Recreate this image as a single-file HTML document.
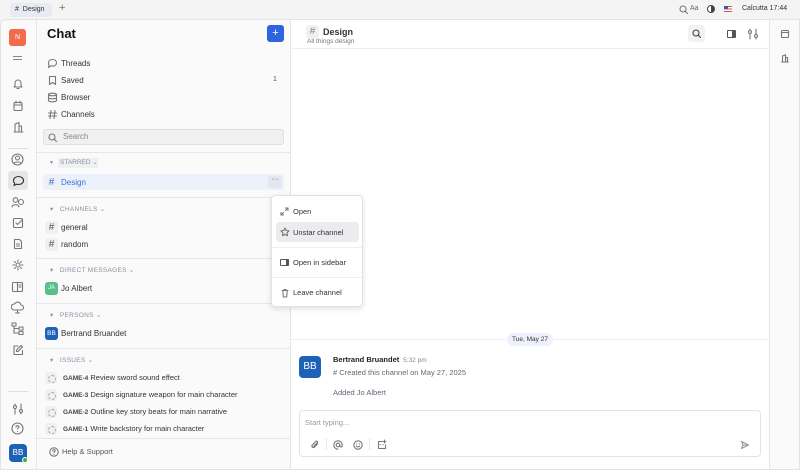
<!DOCTYPE html>
<html><head><meta charset="utf-8"><style>
*{box-sizing:border-box;margin:0;padding:0}
body{width:800px;height:470px;overflow:hidden;background:#f4f4f5;font-family:"Liberation Sans",sans-serif;font-size:8px;color:#222;position:relative}
.a{position:absolute}
svg{position:absolute;fill:none;stroke:#777;stroke-width:1.1;stroke-linecap:round;stroke-linejoin:round}
.nav{position:absolute;left:61px;font-size:8px;color:#333}
.sec{position:absolute;left:50px;font-size:6.5px;color:#8a90a0;letter-spacing:.3px}
.hash{position:absolute;width:13px;height:13px;background:#eef0f3;border-radius:3px;color:#555;font-size:10px;text-align:center;line-height:13px}
.hr{position:absolute;left:37px;width:253px;height:1px;background:#e6e6e8}
.iss{position:absolute;left:45px;font-size:7.5px;color:#333}
.iss b{font-size:6.5px;color:#444}
.iss i{display:inline-block;width:12px;height:12px;background:#eef0f3;border-radius:3px;vertical-align:middle;margin-right:6px;position:relative}
.iss i:after{content:"";position:absolute;left:3px;top:3px;width:6px;height:6px;border:1px dashed #aaa;border-radius:50%}
.mi{position:absolute;left:21px;font-size:7.5px;color:#333}
</style></head><body>
<!-- top bar -->
<div class="a" style="left:10px;top:3px;width:42px;height:14px;background:#e9ebf3;border-radius:3px;font-size:7px;line-height:14px;padding-left:5px;color:#333">#&nbsp; Design</div>
<div class="a" style="left:59px;top:2px;font-size:11px;color:#777">+</div>
<svg style="left:679px;top:5px" width="9" height="9" viewBox="0 0 9 9"><circle cx="4" cy="4" r="3"/><path d="M6 6l2.5 2.5"/></svg>
<div class="a" style="left:690px;top:5px;font-size:7px;color:#666">Aa</div>
<div class="a" style="left:707px;top:5px;width:8px;height:8px;border-radius:50%;border:1px solid #444;background:linear-gradient(90deg,#fff 50%,#444 50%)"></div>
<div class="a" style="left:724px;top:6px;width:8px;height:6px;background:linear-gradient(#c55 0 20%,#fff 20% 40%,#c55 40% 60%,#fff 60% 80%,#c55 80%)"></div>
<div class="a" style="left:724px;top:6px;width:4px;height:3px;background:#45a"></div>
<div class="a" style="left:742px;top:5px;font-size:7px;color:#333">Calcutta 17:44</div>
<!-- frame -->
<div class="a" style="left:0;top:19px;width:800px;height:451px;background:#fafafa;border:1px solid #e3e3e5;border-radius:6px 0 0 0"></div>
<div class="a" style="left:36px;top:20px;width:1px;height:450px;background:#e6e6e8"></div>
<!-- rail -->
<div class="a" style="left:9px;top:29px;width:17px;height:17px;background:#f26b4b;border-radius:3px;color:#fff;font-size:7px;text-align:center;line-height:17px">N</div>
<div class="a" style="left:13px;top:56px;width:9px;height:4px;border-top:1px solid #888;border-bottom:1px solid #888"></div>
<svg style="left:12px;top:78px" width="12" height="12" viewBox="0 0 12 12"><path d="M3 8V5a3 3 0 016 0v3l1 1H2zM5 10.5h2"/></svg>
<svg style="left:12px;top:100px" width="12" height="12" viewBox="0 0 12 12"><rect x="2" y="2.5" width="8" height="8" rx="1"/><path d="M2 5h8M4 1v2M8 1v2"/></svg>
<svg style="left:12px;top:121px" width="12" height="12" viewBox="0 0 12 12"><path d="M3 11V3l4-1.5V11M7 5h2.5v6M2 11h9"/></svg>
<div class="a" style="left:8px;top:148px;width:20px;height:1px;background:#ddd"></div>
<svg style="left:11px;top:153px" width="13" height="13" viewBox="0 0 13 13"><circle cx="6.5" cy="6.5" r="5.5"/><circle cx="6.5" cy="5" r="2"/><path d="M3 10.5c1-2 6-2 7 0"/></svg>
<div class="a" style="left:8px;top:171px;width:20px;height:19px;background:#e6e6e8;border-radius:3px"></div>
<svg style="left:12px;top:175px" width="13" height="12" viewBox="0 0 13 12"><path d="M6.5 1.5c3 0 5 1.7 5 4s-2 4-5 4c-.7 0-1.4-.1-2-.3L2 10.5l.7-2.2C1.9 7.6 1.5 6.6 1.5 5.5c0-2.3 2-4 5-4z" style="stroke:#333"/></svg>
<svg style="left:11px;top:196px" width="14" height="12" viewBox="0 0 14 12"><circle cx="4.5" cy="4" r="2.3"/><path d="M1 11c.5-3 6.5-3 7 0"/><circle cx="10" cy="6" r="2.5"/></svg>
<svg style="left:12px;top:217px" width="12" height="12" viewBox="0 0 12 12"><rect x="1.5" y="1.5" width="9" height="9" rx="1"/><path d="M4 6l1.5 1.5L10 3"/></svg>
<svg style="left:12px;top:238px" width="12" height="12" viewBox="0 0 12 12"><path d="M2.5 1.5h5l2 2v7h-7zM4.5 6h3M4.5 8h3"/></svg>
<svg style="left:12px;top:259px" width="12" height="12" viewBox="0 0 12 12"><circle cx="6" cy="6" r="2"/><path d="M6 1v1.5M6 9.5V11M1 6h1.5M9.5 6H11M2.5 2.5l1 1M8.5 8.5l1 1M2.5 9.5l1-1M8.5 3.5l1-1"/></svg>
<svg style="left:11px;top:281px" width="13" height="12" viewBox="0 0 13 12"><rect x="1.5" y="1.5" width="10" height="9" rx="1"/><path d="M6.5 1.5v9M8 4h2M8 6h2"/></svg>
<svg style="left:11px;top:301px" width="13" height="13" viewBox="0 0 13 13"><path d="M3 9a3 3 0 01.5-6A3.5 3.5 0 0110 4a2.5 2.5 0 010 5zM6.5 9v3M4.5 12h4"/></svg>
<svg style="left:11px;top:322px" width="13" height="13" viewBox="0 0 13 13"><rect x="1" y="1" width="4" height="3"/><rect x="8" y="5" width="4" height="3"/><rect x="8" y="9.5" width="4" height="3"/><path d="M3 4v7h5M3 6.5h5"/></svg>
<svg style="left:12px;top:344px" width="12" height="12" viewBox="0 0 12 12"><path d="M6 2H2v8.5h8.5V6.5M9 1.5l1.5 1.5L6 7.5H4.5V6z"/></svg>
<div class="a" style="left:8px;top:391px;width:20px;height:1px;background:#ddd"></div>
<svg style="left:12px;top:403px" width="12" height="12" viewBox="0 0 12 12"><path d="M3 1v10M9 1v10"/><circle cx="3" cy="4" r="1.5" style="fill:#fafafa"/><circle cx="9" cy="8" r="1.5" style="fill:#fafafa"/></svg>
<svg style="left:11px;top:422px" width="13" height="13" viewBox="0 0 13 13"><circle cx="6.5" cy="6.5" r="5.5"/><path d="M5 5a1.5 1.5 0 113 .3c-.5.6-1.5.8-1.5 1.7M6.5 9.3v.2"/></svg>
<div class="a" style="left:9px;top:444px;width:18px;height:18px;background:#1e62b8;border-radius:4px;color:#fff;font-size:8px;text-align:center;line-height:18px">BB</div>
<div class="a" style="left:22px;top:457px;width:6px;height:6px;background:#2fb34f;border-radius:50%;border:1px solid #fff"></div>
<!-- sidebar -->
<div class="a" style="left:47px;top:26px;font-size:13px;font-weight:bold;color:#111">Chat</div>
<div class="a" style="left:267px;top:25px;width:17px;height:17px;background:#2f63e0;border-radius:3px;color:#fff;font-size:11px;text-align:center;line-height:16px">+</div>
<svg style="left:47px;top:58px" width="11" height="11" viewBox="0 0 11 11"><path d="M5.5 1.5c2.5 0 4 1.4 4 3.3s-1.5 3.3-4 3.3c-.6 0-1.2-.1-1.6-.3L1.5 9.5l.6-2C1.7 6.8 1.5 5.8 1.5 4.8c0-1.9 1.5-3.3 4-3.3z"/></svg>
<div class="nav" style="top:59px">Threads</div>
<svg style="left:47px;top:75px" width="11" height="11" viewBox="0 0 11 11"><path d="M2.5 1.5h6v8l-3-2-3 2z"/></svg>
<div class="nav" style="top:76px">Saved</div>
<div class="a" style="left:273px;top:76px;font-size:7px;color:#555">1</div>
<svg style="left:47px;top:92px" width="11" height="11" viewBox="0 0 11 11"><ellipse cx="5.5" cy="2.5" rx="4" ry="1.3"/><path d="M1.5 2.5v6c0 .7 1.8 1.3 4 1.3s4-.6 4-1.3v-6M1.5 5.5c0 .7 1.8 1.3 4 1.3s4-.6 4-1.3"/></svg>
<div class="nav" style="top:93px">Browser</div>
<svg style="left:47px;top:109px" width="11" height="11" viewBox="0 0 11 11"><path d="M4 1.5l-1 8M8 1.5l-1 8M1.5 4h8M1.5 7h8"/></svg>
<div class="nav" style="top:110px">Channels</div>
<div class="a" style="left:43px;top:129px;width:241px;height:16px;background:#f0f0f1;border:1px solid #e0e0e2;border-radius:3px;font-size:8px;color:#888;line-height:14px;padding-left:19px">Search</div>
<svg style="left:48px;top:133px" width="9" height="9" viewBox="0 0 9 9"><circle cx="4" cy="4" r="3"/><path d="M6 6l2.5 2.5"/></svg>
<div class="hr" style="top:152px"></div>
<div class="a" style="left:49px;top:160px;font-size:5px;color:#888">▼</div>
<div class="a" style="left:58px;top:158px;width:40px;height:10px;background:#eef0f3;border-radius:2px;font-size:6.5px;color:#8a90a0;line-height:10px;padding-left:2px">STARRED ⌄</div>
<div class="a" style="left:43px;top:174px;width:241px;height:16px;background:#edf1fb;border-radius:3px"></div>
<div class="hash" style="left:45px;top:176px;color:#3a6fd8">#</div>
<div class="a" style="left:61px;top:178px;font-size:8px;color:#3a6fd8">Design</div>
<div class="a" style="left:268px;top:176px;width:14px;height:12px;background:#e3e7f1;border-radius:2px;font-size:7px;text-align:center;color:#555">···</div>
<div class="hr" style="top:197px"></div>
<div class="sec" style="top:205px">▾ &nbsp; CHANNELS ⌄</div>
<div class="hash" style="left:45px;top:221px">#</div><div class="nav" style="top:223px">general</div>
<div class="hash" style="left:45px;top:238px">#</div><div class="nav" style="top:240px">random</div>
<div class="hr" style="top:258px"></div>
<div class="sec" style="top:266px">▾ &nbsp; DIRECT MESSAGES ⌄</div>
<div class="a" style="left:45px;top:282px;width:13px;height:13px;background:#5ac08a;border-radius:3px;color:#dff;font-size:6px;text-align:center;line-height:13px">JA</div>
<div class="nav" style="top:284px">Jo Albert</div>
<div class="hr" style="top:303px"></div>
<div class="sec" style="top:311px">▾ &nbsp; PERSONS ⌄</div>
<div class="a" style="left:45px;top:327px;width:13px;height:13px;background:#1e62b8;border-radius:3px;color:#fff;font-size:6.5px;text-align:center;line-height:13px">BB</div>
<div class="nav" style="top:329px">Bertrand Bruandet</div>
<div class="hr" style="top:348px"></div>
<div class="sec" style="top:356px">▾ &nbsp; ISSUES ⌄</div>
<div class="iss" style="top:372px"><i></i><b>GAME-4</b> Review sword sound effect</div>
<div class="iss" style="top:389px"><i></i><b>GAME-3</b> Design signature weapon for main character</div>
<div class="iss" style="top:406px"><i></i><b>GAME-2</b> Outline key story beats for main narrative</div>
<div class="iss" style="top:423px"><i></i><b>GAME-1</b> Write backstory for main character</div>
<div class="hr" style="top:438px"></div>
<svg style="left:49px;top:447px" width="10" height="10" viewBox="0 0 10 10"><circle cx="5" cy="5" r="4.2"/><path d="M3.8 4a1.2 1.2 0 112.3.3c-.4.5-1.1.6-1.1 1.4M5 7.3v.1"/></svg>
<div class="a" style="left:62px;top:447px;font-size:7.5px;color:#555">Help &amp; Support</div>
<!-- main -->
<div class="a" style="left:290px;top:20px;width:480px;height:449px;background:#fff;border-left:1px solid #e6e6e8;border-right:1px solid #e6e6e8"></div>
<div class="a" style="left:290px;top:48px;width:480px;height:1px;background:#eceef2"></div>
<div class="hash" style="left:306px;top:25px;color:#888">#</div>
<div class="a" style="left:323px;top:27px;font-size:9px;font-weight:bold;color:#333">Design</div>
<div class="a" style="left:307px;top:38px;font-size:6.5px;color:#777">All things design</div>
<div class="a" style="left:688px;top:25px;width:17px;height:17px;background:#f2f2f3;border-radius:3px"></div>
<svg style="left:692px;top:29px" width="9" height="9" viewBox="0 0 9 9"><circle cx="4" cy="4" r="3" style="stroke:#444"/><path d="M6 6l2.5 2.5" style="stroke:#444"/></svg>
<div class="a" style="left:727px;top:30px;width:9px;height:8px;border:1.2px solid #555;border-right-width:4px;border-radius:1px"></div>
<svg style="left:747px;top:28px" width="12" height="12" viewBox="0 0 12 12"><path d="M3 1v10M9 1v10"/><circle cx="3" cy="4" r="1.5" style="fill:#fff"/><circle cx="9" cy="8" r="1.5" style="fill:#fff"/></svg>
<svg style="left:780px;top:29px" width="10" height="10" viewBox="0 0 10 10"><rect x="1.5" y="1.5" width="7" height="7" rx="1"/><path d="M1.5 3.5h7"/></svg>
<svg style="left:780px;top:53px" width="10" height="10" viewBox="0 0 10 10"><path d="M2.5 9V3l3-1.2V9M5.5 4.5h2V9M1.5 9h7"/></svg>
<div class="a" style="left:290px;top:339px;width:480px;height:1px;background:#eef0f6"></div>
<div class="a" style="left:507px;top:333px;width:46px;height:13px;background:#eef1fb;border-radius:7px;font-size:6.5px;text-align:center;line-height:13px;color:#333">Tue, May 27</div>
<div class="a" style="left:299px;top:356px;width:22px;height:22px;background:#1e62b8;border-radius:4px;color:#fff;font-size:10px;text-align:center;line-height:22px">BB</div>
<div class="a" style="left:333px;top:355px;font-size:7.5px;color:#222;font-weight:bold">Bertrand Bruandet <span style="font-weight:normal;font-size:6.5px;color:#888">&nbsp;5:32 pm</span></div>
<div class="a" style="left:333px;top:368px;font-size:7.5px;color:#667">#&nbsp;Created this channel on May 27, 2025</div>
<div class="a" style="left:333px;top:388px;font-size:7.5px;color:#667">Added Jo Albert</div>
<div class="a" style="left:299px;top:410px;width:462px;height:47px;border:1px solid #e3e3e6;border-radius:4px"></div>
<div class="a" style="left:305px;top:418px;font-size:7.5px;color:#999">Start typing...</div>
<svg style="left:310px;top:440px" width="10" height="10" viewBox="0 0 10 10"><path d="M7.5 4L4.3 7.2a1.5 1.5 0 01-2.1-2.1L6 1.3a1 1 0 011.4 1.4L3.8 6.3"/></svg>
<div class="a" style="left:326px;top:438px;width:1px;height:12px;background:#e6e6e8"></div>
<svg style="left:333px;top:440px" width="10" height="10" viewBox="0 0 10 10"><circle cx="5" cy="5" r="1.8"/><path d="M6.8 5v.8a1.2 1.2 0 002.4 0V5A4.2 4.2 0 105 9.2"/></svg>
<svg style="left:353px;top:440px" width="10" height="10" viewBox="0 0 10 10"><circle cx="5" cy="5" r="4.2"/><path d="M3.3 6a2 2 0 003.4 0M3.6 3.8v.1M6.4 3.8v.1"/></svg>
<div class="a" style="left:369px;top:438px;width:1px;height:12px;background:#e6e6e8"></div>
<svg style="left:376px;top:439px" width="11" height="11" viewBox="0 0 11 11"><path d="M6 2.5H2.5v7h7V6M8.5 1v3M7 2.5h3M4 5.5l.1.1M7 5.5l.1.1"/></svg>
<svg style="left:740px;top:440px" width="10" height="10" viewBox="0 0 10 10"><path d="M1.5 1.5l7 3.5-7 3.5 1.5-3.5zM3 5h5.5" style="stroke:#999"/></svg>
<!-- context menu -->
<div class="a" style="left:271px;top:195px;width:92px;height:112px;background:#fff;border:1px solid #e2e2e4;border-radius:4px;box-shadow:0 2px 6px rgba(0,0,0,.12)">
<div class="a" style="left:4px;top:26px;width:83px;height:20px;background:#ececee;border-radius:3px"></div>
<div class="a" style="left:0;top:51px;width:90px;height:1px;background:#eee"></div>
<div class="a" style="left:0;top:81px;width:90px;height:1px;background:#eee"></div>
<svg style="left:8px;top:11px" width="9" height="9" viewBox="0 0 9 9"><path d="M1 8l2.5-2.5M1 5.5V8h2.5M8 1L5.5 3.5M5.5 1H8v2.5"/></svg>
<div class="mi" style="top:11px">Open</div>
<svg style="left:8px;top:31px" width="10" height="10" viewBox="0 0 10 10"><path d="M5 1l1.2 2.5 2.8.4-2 2 .5 2.8L5 7.4 2.5 8.7 3 5.9l-2-2 2.8-.4z"/></svg>
<div class="mi" style="top:32px">Unstar channel</div>
<div class="a" style="left:8px;top:63px;width:9px;height:7px;border:1px solid #555;border-right-width:3.5px;border-radius:1px"></div>
<div class="mi" style="top:62px">Open in sidebar</div>
<svg style="left:8px;top:92px" width="10" height="10" viewBox="0 0 10 10"><path d="M2 2.5h6M4 2.5V1.5h2v1M2.8 2.5l.5 6.5h3.4l.5-6.5"/></svg>
<div class="mi" style="top:92px">Leave channel</div>
</div>
</body></html>
